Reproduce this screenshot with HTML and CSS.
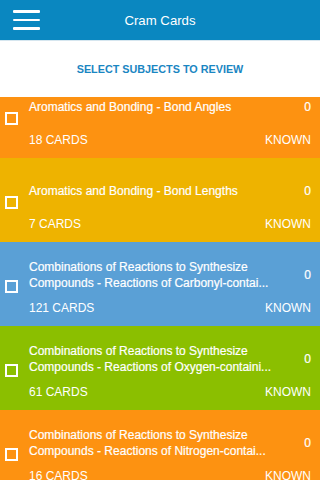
FILE: index.html
```html
<!DOCTYPE html>
<html>
<head>
<meta charset="utf-8">
<link rel="stylesheet" href="styles.css">
</head>
<body>
<div class="app">
  <header class="nav">
    <div class="menu"><span></span><span></span><span></span></div>
    <div class="nav-title">Cram Cards</div>
  </header>
  <div class="subhead">SELECT SUBJECTS TO REVIEW</div>
  <div class="list">
    <div class="list-inner">
      <div class="card orange">
        <div class="check"></div>
        <div class="body">
          <div class="top"><div class="title">Aromatics and Bonding - Bond Angles</div><div class="count">0</div></div>
          <div class="bottom"><span>18 CARDS</span><span>KNOWN</span></div>
        </div>
      </div>
      <div class="card yellow">
        <div class="check"></div>
        <div class="body">
          <div class="top"><div class="title">Aromatics and Bonding - Bond Lengths</div><div class="count">0</div></div>
          <div class="bottom"><span>7 CARDS</span><span>KNOWN</span></div>
        </div>
      </div>
      <div class="card blue">
        <div class="check"></div>
        <div class="body">
          <div class="top"><div class="title">Combinations of Reactions to Synthesize Compounds - Reactions of Carbonyl-contai...</div><div class="count">0</div></div>
          <div class="bottom"><span>121 CARDS</span><span>KNOWN</span></div>
        </div>
      </div>
      <div class="card green">
        <div class="check"></div>
        <div class="body">
          <div class="top"><div class="title">Combinations of Reactions to Synthesize Compounds - Reactions of Oxygen-containi...</div><div class="count">0</div></div>
          <div class="bottom"><span>61 CARDS</span><span>KNOWN</span></div>
        </div>
      </div>
      <div class="card orange">
        <div class="check"></div>
        <div class="body">
          <div class="top"><div class="title">Combinations of Reactions to Synthesize Compounds - Reactions of Nitrogen-contai...</div><div class="count">0</div></div>
          <div class="bottom"><span>16 CARDS</span><span>KNOWN</span></div>
        </div>
      </div>
    </div>
  </div>
</div>
</body>
</html>
```

FILE: styles.css
```css
html, body {
  margin: 0;
  padding: 0;
  background: #ffffff;
}
body {
  font-family: "Liberation Sans", Arial, sans-serif;
  color: #ffffff;
}
.app {
  width: 320px;
  height: 480px;
  overflow: hidden;
  display: flex;
  flex-direction: column;
}
.nav {
  height: 40px;
  background: #0a87c0;
  border-bottom: 1px solid #d6e6ef;
  display: flex;
  align-items: center;
  justify-content: center;
  position: relative;
  flex: none;
}
.menu {
  position: absolute;
  left: 13px;
  top: 10px;
  width: 27px;
  display: flex;
  flex-direction: column;
  gap: 6px;
}
.menu span {
  display: block;
  height: 2.5px;
  background: #ffffff;
  border-radius: 1px;
}
.nav-title {
  font-size: 13.2px;
  color: #ffffff;
}
.subhead {
  height: 56px;
  flex: none;
  display: flex;
  align-items: center;
  justify-content: center;
  font-size: 10.8px;
  font-weight: bold;
  color: #1a86c2;
  background: #ffffff;
}
.list {
  flex: 1;
  overflow: hidden;
}
.list-inner {
  margin-top: -23px;
}
.card {
  height: 84px;
  box-sizing: border-box;
  padding: 8px 9px 10px 5px;
  display: flex;
}
.orange { background: #fd9211; }
.yellow { background: #eeb300; }
.blue { background: #5aa0d6; }
.green { background: #8bbf00; }
.check {
  flex: none;
  width: 13px;
  height: 13px;
  box-sizing: border-box;
  border: 2px solid #ffffff;
  margin-top: 30px;
  margin-right: 11px;
}
.body {
  flex: 1;
  display: flex;
  flex-direction: column;
}
.top {
  height: 50px;
  display: flex;
  align-items: center;
  justify-content: space-between;
}
.title {
  width: 262px;
  font-size: 12px;
  line-height: 16px;
  -webkit-text-stroke: 0.2px #ffffff;
}
.count {
  font-size: 12px;
  -webkit-text-stroke: 0.2px #ffffff;
}
.bottom {
  height: 16px;
  display: flex;
  align-items: center;
  justify-content: space-between;
  font-size: 12px;
}
```
